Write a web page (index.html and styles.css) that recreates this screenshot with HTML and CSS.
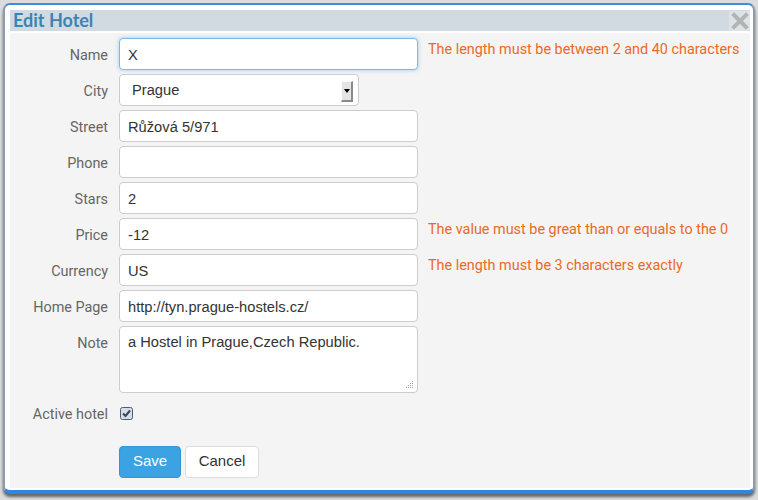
FILE: index.html
```html
<!DOCTYPE html>
<html>
<head>
<meta charset="utf-8">
<link rel="stylesheet" href="styles.css">
</head>
<body>
<div class="dialog">
  <div class="titlebar">
    <span class="title">Edit Hotel</span>
    <span class="close"><svg width="18" height="18" viewBox="0 0 18 18"><path d="M3 3L15 15M15 3L3 15" stroke="#b4b4b4" stroke-width="4" stroke-linecap="square"/></svg></span>
  </div>
  <div class="content">
    <div class="form">
      <label class="lbl">Name</label>
      <div class="field"><div class="input focus w-full">X</div><span class="err">The length must be between 2 and 40 characters</span></div>
      <label class="lbl">City</label>
      <div class="field"><div class="input select">Prague<span class="arrow"><svg width="6" height="4" viewBox="0 0 6 4"><path d="M0 0H6L3 4Z" fill="#000"/></svg></span></div></div>
      <label class="lbl">Street</label>
      <div class="field"><div class="input w-full">Růžová 5/971</div></div>
      <label class="lbl">Phone</label>
      <div class="field"><div class="input w-full"></div></div>
      <label class="lbl">Stars</label>
      <div class="field"><div class="input w-full">2</div></div>
      <label class="lbl">Price</label>
      <div class="field"><div class="input w-full">-12</div><span class="err">The value must be great than or equals to the 0</span></div>
      <label class="lbl">Currency</label>
      <div class="field"><div class="input w-full">US</div><span class="err">The length must be 3 characters exactly</span></div>
      <label class="lbl">Home Page</label>
      <div class="field"><div class="input w-full">http://tyn.prague-hostels.cz/</div></div>
      <label class="lbl lbl-top">Note</label>
      <div class="field"><div class="input textarea w-full">a Hostel in Prague,Czech Republic.<span class="grip"><svg width="7" height="7" viewBox="0 0 7 7"><g fill="#a0a0a0"><rect x="6" y="0" width="1" height="1"/><rect x="4" y="2" width="1" height="1"/><rect x="6" y="2" width="1" height="1"/><rect x="2" y="4" width="1" height="1"/><rect x="4" y="4" width="1" height="1"/><rect x="6" y="4" width="1" height="1"/><rect x="0" y="6" width="1" height="1"/><rect x="2" y="6" width="1" height="1"/><rect x="4" y="6" width="1" height="1"/><rect x="6" y="6" width="1" height="1"/></g></svg></span></div></div>
      <label class="lbl">Active hotel</label>
      <div class="field"><span class="check"><svg width="13" height="13" viewBox="0 0 13 13"><rect x="0.5" y="0.5" width="12" height="12" rx="2" fill="#d5dee8" stroke="#4b5d70"/><path d="M3 6.5L5.5 9L10 3.5" fill="none" stroke="#34465a" stroke-width="2"/></svg></span></div>
    </div>
    <div class="buttons">
      <button class="btn btn-save">Save</button>
      <button class="btn btn-cancel">Cancel</button>
    </div>
  </div>
</div>
</body>
</html>
```

FILE: styles.css
```css
html, body {
  margin: 0;
  padding: 0;
}
body {
  background: #dcdcdc;
  width: 758px;
  height: 500px;
  overflow: hidden;
}
.dialog {
  box-sizing: border-box;
  width: 752px;
  height: 491px;
  margin: 3px 0 0 3px;
  border: 2px solid #8d9cab;
  border-top-color: #3b8edb;
  border-bottom: 4px solid #2d86e0;
  border-radius: 7px;
  background: #fff;
  padding: 5px 3px 2px 5px;
  box-shadow: 0 3px 3px rgba(0, 0, 0, 0.55);
  display: flex;
  flex-direction: column;
}
.titlebar {
  height: 21px;
  background: #d1dae0;
  display: flex;
  align-items: center;
  justify-content: space-between;
  flex-shrink: 0;
}
.title {
  font-family: "Lato", sans-serif;
  font-weight: bold;
  font-size: 18px;
  color: #3984b8;
  padding-left: 3px;
  line-height: 21px;
}
.close {
  width: 21px;
  height: 20px;
  background: #dde3e7;
  display: flex;
  align-items: center;
  justify-content: center;
}
.content {
  margin-top: 2px;
  flex: 1;
  background: #f4f4f4;
  padding-top: 5px;
}
.form {
  display: grid;
  grid-template-columns: 98px 1fr;
  column-gap: 11px;
  row-gap: 4px;
}
.lbl {
  font-family: "Roboto", sans-serif;
  font-size: 14.4px;
  color: #666;
  text-align: right;
  align-self: center;
  padding-top: 3px;
}
.lbl-top {
  align-self: start;
  padding-top: 9px;
}
.field {
  display: flex;
  align-items: flex-start;
  min-height: 32px;
}
.input {
  box-sizing: border-box;
  height: 32px;
  border: 1px solid #cccccc;
  border-radius: 4px;
  background: #fff;
  font-family: "Liberation Sans", Arial, sans-serif;
  font-size: 14.7px;
  color: #333;
  padding: 2px 8px 0;
  line-height: 28px;
  display: flex;
  align-items: center;
  flex-shrink: 0;
}
.w-full {
  width: 299px;
}
.focus {
  border-color: #80b9e8;
  box-shadow: 0 0 4px rgba(102, 175, 233, 0.6);
}
.select {
  width: 240px;
  padding-left: 12px;
  padding-right: 5px;
  padding-top: 0;
}
.select .arrow {
  margin-top: 2px;
}
.arrow {
  margin-left: auto;
  width: 12px;
  height: 21px;
  box-sizing: border-box;
  background: #e4e4e4;
  border-right: 2px solid #8a8a8a;
  border-bottom: 2px solid #8a8a8a;
  border-top: 1px solid #fafafa;
  border-left: 1px solid #fafafa;
  display: flex;
  align-items: center;
  justify-content: center;
}
.textarea {
  height: 67px;
  align-items: flex-start;
  line-height: 20px;
  padding-top: 5px;
  position: relative;
}
.grip {
  position: absolute;
  right: 4px;
  bottom: 4px;
  width: 7px;
  height: 7px;
  display: flex;
}
.err {
  font-family: "Roboto", sans-serif;
  font-size: 14.4px;
  color: #ea6a26;
  margin-left: 10px;
  line-height: 20px;
  padding-top: 2px;
  white-space: nowrap;
}
.check {
  display: flex;
  align-self: center;
  margin-left: 1px;
}
.buttons {
  display: flex;
  gap: 4px;
  margin-left: 109px;
  margin-top: 17px;
}
.btn {
  box-sizing: border-box;
  height: 32px;
  border-radius: 4px;
  font-family: "Liberation Sans", Arial, sans-serif;
  font-size: 15px;
  padding: 0 0 3px;
  cursor: pointer;
}
.btn-save {
  width: 62px;
  background: #3ba3e3;
  border: 1px solid #3296d6;
  color: #fff;
}
.btn-cancel {
  width: 74px;
  background: #fff;
  border: 1px solid #dddddd;
  color: #333;
}
```
